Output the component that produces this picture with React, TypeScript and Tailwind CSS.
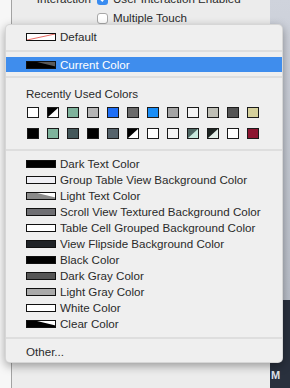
import React from 'react'

type Swatch = { fill: string; alt?: string }

const RECENT_TOP: Swatch[] = [
  { fill: '#ffffff' },
  { fill: '#000000', alt: '#ffffff' },
  { fill: '#7fb39c' },
  { fill: '#b5b5b5' },
  { fill: '#1f6ff6' },
  { fill: '#6b6b6b' },
  { fill: '#1a8ef7' },
  { fill: '#a4a4a4' },
  { fill: '#f3f3f3' },
  { fill: '#bebeb5' },
  { fill: '#555555' },
  { fill: '#d5d09c' },
]

const RECENT_BOTTOM: Swatch[] = [
  { fill: '#000000' },
  { fill: '#7fb39c' },
  { fill: '#44575a' },
  { fill: '#000000' },
  { fill: '#56636b' },
  { fill: '#000000', alt: '#ffffff' },
  { fill: '#ffffff' },
  { fill: '#f3f3f3' },
  { fill: '#4d6662', alt: '#c8e8dd' },
  { fill: '#1d2421', alt: '#e3efe9' },
  { fill: '#ffffff' },
  { fill: '#8c1631' },
]

type NamedColor = { label: string; fill: string; alpha?: string }

const NAMED: NamedColor[] = [
  { label: 'Dark Text Color', fill: '#000000' },
  { label: 'Group Table View Background Color', fill: '#efeff4' },
  { label: 'Light Text Color', fill: '#8a8a8a', alpha: '#ffffff' },
  { label: 'Scroll View Textured Background Color', fill: '#6f6f73' },
  { label: 'Table Cell Grouped Background Color', fill: '#ffffff' },
  { label: 'View Flipside Background Color', fill: '#1f2226' },
  { label: 'Black Color', fill: '#000000' },
  { label: 'Dark Gray Color', fill: '#555555' },
  { label: 'Light Gray Color', fill: '#aaaaaa' },
  { label: 'White Color', fill: '#ffffff' },
  { label: 'Clear Color', fill: '#000000', alpha: '#ffffff' },
]

function SmallSwatch({ s }: { s: Swatch }) {
  return (
    <svg width="12" height="11" viewBox="0 0 12 11" className="shrink-0">
      <rect x="0.5" y="0.5" width="11" height="10" fill={s.fill} />
      {s.alt && <polygon points="11.5,0.5 11.5,10.5 0.5,10.5" fill={s.alt} />}
      <rect x="0.5" y="0.5" width="11" height="10" fill="none" stroke="#1a1a1a" />
    </svg>
  )
}

// wide colour well used in the menu rows
function WideSwatch({ fill, alpha, line }: { fill: string; alpha?: string; line?: boolean }) {
  return (
    <svg width="30" height="8" viewBox="0 0 30 8" className="shrink-0">
      <rect x="0.5" y="0.5" width="29" height="7" fill={alpha ?? fill} />
      {alpha && <polygon points="0.5,0.5 9,0.5 29.5,5.5 29.5,7.5 0.5,7.5" fill={fill} />}
      {line && <line x1="1" y1="7" x2="29" y2="1" stroke="#e0433a" strokeWidth="0.8" />}
      <rect x="0.5" y="0.5" width="29" height="7" fill="none" stroke="#111" />
    </svg>
  )
}

function Separator({ above, below }: { above: string; below: string }) {
  return (
    <div className={`${above} ${below}`}>
      <div className="h-[2px] bg-[#dedede]" />
    </div>
  )
}

export default function App() {
  return (
    <div
      className="relative w-[290px] h-[388px] overflow-hidden flex text-[11.6px] text-[#2a2a2a]"
      style={{ fontFamily: '"Liberation Sans", Arial, sans-serif' }}
    >
      {/* desktop + inspector window behind the menu */}
      <div className="w-[11px] bg-[#f7f7f7]" />
      <div className="w-[259px] bg-[#ececec] border-l border-[#a3a3a3]">
        <div className="flex items-center h-[16px] -mt-[9px]">
          <span className="w-[85px] text-right pr-[6px]">Interaction</span>
          <span className="w-[11px] h-[11px] rounded-[3px] bg-[#3a8cf0] flex items-center justify-center">
            <svg width="8" height="8" viewBox="0 0 8 8">
              <path d="M1.5 4.2 L3.3 6 L6.6 1.8" stroke="#fff" strokeWidth="1.4" fill="none" />
            </svg>
          </span>
          <span className="pl-[5px]">User Interaction Enabled</span>
        </div>
        <div className="flex items-center h-[16px] mt-[3px]">
          <span className="w-[85px]" />
          <span className="w-[11px] h-[11px] rounded-[3px] bg-white border border-[#a8a8a8]" />
          <span className="pl-[5px]">Multiple Touch</span>
        </div>
      </div>
      <div className="flex-1 flex flex-col">
        <div className="h-[300px] bg-gradient-to-b from-[#cfd3dc] to-[#b9bec8]" />
        <div className="flex-1 bg-[#29303d] flex items-end pb-[5px] pl-[1px]">
          <span className="text-[11px] font-bold text-[#dfe3ea]">M</span>
        </div>
      </div>

      {/* colour pop-up menu */}
      <div className="absolute left-[5px] top-[24px] w-[278px] h-[339px] rounded-[5px] bg-[#efefef] border border-[#0000001a] shadow-[0_3px_10px_rgba(0,0,0,0.35)] pt-[4px]">
        <div className="flex items-center h-[16px] pl-[20px] gap-[4px]">
          <WideSwatch fill="#ffffff" line />
          <span>Default</span>
        </div>
        <Separator above="pt-[5px]" below="pb-[5px]" />
        <div className="flex items-center h-[15px] pl-[20px] gap-[4px] bg-[#3f8ded] text-white">
          <WideSwatch fill="#000000" alpha="#5a5a5a" />
          <span>Current Color</span>
        </div>
        <Separator above="pt-[4px]" below="pb-[8px]" />
        <div className="pl-[20px]">
          <div className="h-[16px] flex items-center">Recently Used Colors</div>
          <div className="mt-[5px] flex flex-col gap-[10px] pl-[1px]">
            {[RECENT_TOP, RECENT_BOTTOM].map((row, i) => (
              <div key={i} className="flex gap-[8px]">
                {row.map((s, j) => (
                  <SmallSwatch key={j} s={s} />
                ))}
              </div>
            ))}
          </div>
        </div>
        <Separator above="pt-[10px]" below="pb-[5px]" />
        <div>
          {NAMED.map((c) => (
            <div key={c.label} className="flex items-center h-[16px] pl-[20px] gap-[4px]">
              <WideSwatch fill={c.fill} alpha={c.alpha} />
              <span>{c.label}</span>
            </div>
          ))}
        </div>
        <Separator above="pt-[5px]" below="pb-[5px]" />
        <div className="flex items-center h-[16px] pl-[20px]">Other...</div>
      </div>
    </div>
  )
}
